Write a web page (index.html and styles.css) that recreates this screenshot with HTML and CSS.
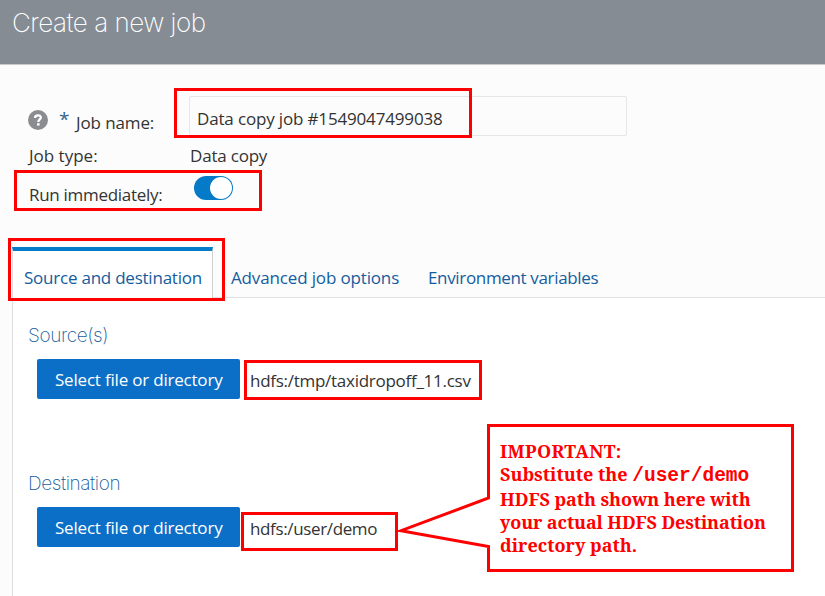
FILE: index.html
```
<!DOCTYPE html>
<html lang="en">
<head>
<meta charset="utf-8">
<title>Create a new job</title>
<link rel="stylesheet" href="styles.css">
</head>
<body>
<header class="header"><h1>Create a new job</h1></header>
<main>
  <section class="form">
    <div class="row row-name">
      <div class="label">
        <svg class="help" width="20" height="20" viewBox="0 0 20 20"><circle cx="10" cy="10" r="10" fill="#8a8d90"/><path d="M7 8C7 4.4 13.1 4.5 12.8 7.8C12.7 9.4 10.3 9.7 10.3 12" fill="none" stroke="#fff" stroke-width="2.3"/><rect x="9" y="13.2" width="2.6" height="2.4" fill="#fff"/></svg>
        <span class="star">*</span><span class="t-name">Job name:</span>
      </div>
      <div class="input"><span class="t-value">Data copy job #1549047499038</span></div>
    </div>
    <div class="row row-type"><span class="label t-type">Job type:</span><span class="t-copy">Data copy</span></div>
    <div class="row row-run"><span class="label t-run">Run immediately:</span><span class="toggle"><i></i></span></div>
  </section>
  <nav class="tabs">
    <div class="tab active"><span class="t-tab1">Source and destination</span></div>
    <div class="tab second"><span class="t-tab2">Advanced job options</span></div>
    <div class="tab third"><span class="t-tab3">Environment variables</span></div>
  </nav>
  <section class="panel">
    <h2 class="t-source">Source(s)</h2>
    <div class="pick"><button><span>Select file or directory</span></button><span class="path t-path1">hdfs:/tmp/taxidropoff_11.csv</span></div>
    <h2 class="t-dest">Destination</h2>
    <div class="pick"><button><span>Select file or directory</span></button><span class="path t-path2">hdfs:/user/demo</span></div>
  </section>
</main>
<svg class="marks" width="825" height="596" viewBox="0 0 825 596" fill="none" stroke="#f00" stroke-width="3">
  <rect x="175.500" y="89.500" width="295" height="47"/>
  <rect x="15.500" y="171.500" width="245" height="38"/>
  <rect x="9.500" y="239.500" width="214" height="60"/>
  <rect x="245.500" y="361.500" width="235" height="37"/>
  <rect x="242.500" y="513.500" width="154" height="36"/>
  <path d="M488.500 425.500H792.500V570.500H488.500V546.500L401 530.700L488.500 498Z" fill="#fff"/>
</svg>
<aside class="note">
  <div class="n1"><span>IMPORTANT:</span></div>
  <div class="n2"><span>Substitute the</span> <code>/user/demo</code></div>
  <div class="n3"><span>HDFS path shown here with</span></div>
  <div class="n4"><span>your actual HDFS Destination</span></div>
  <div class="n5"><span>directory path.</span></div>
</aside>
</body>
</html>
```
FILE: styles.css
```
* { box-sizing: border-box; }
body { margin: 0; width: 825px; height: 596px; overflow: hidden; position: relative; background: #fcfcfc; color: #333; font: 17px/24px "Open Sans", "Noto Sans", sans-serif; white-space: nowrap; }
.header { height: 65px; background: #858c94; border-bottom: 1px solid #c9cccf; padding: 7px 0 0 12px; }
h1 { margin: 0; font: 200 26px/32px Inter, sans-serif; letter-spacing: -.5px; color: #fff; }
.form { height: 182px; padding: 31px 0 0 28px; }
.row { display: flex; }
.row-name { height: 48px; }
.label { width: 162px; flex: none; }
.row-name .label { width: 161px; display: flex; padding-top: 14px; }
.help { margin: 0 11px 0 0; }
.star { width: 17px; font-size: 19px; line-height: 24px; margin-top: -3px; color: #33658c; }
.t-name { margin-top: 1px; letter-spacing: -.12px; }
.t-value { letter-spacing: -.16px; }
.t-copy { letter-spacing: -.2px; }
.t-run { letter-spacing: -.3px; }
.t-tab1 { letter-spacing: -.23px; }
.t-tab2 { letter-spacing: -.15px; }
.t-tab3 { letter-spacing: -.34px; }
.t-path1 { letter-spacing: -.27px; }
.t-path2 { letter-spacing: -.36px; }
.input { width: 438px; height: 40px; border: 1px solid #e4e6e8; border-radius: 2px; padding: 10px 7px; }
.row-type { height: 32px; }
.row-type .label { padding-left: 1px; }
.row-run .label { width: 166px; padding: 7px 0 0 1px; }
.toggle { width: 39px; height: 24px; border-radius: 12px; background: #057ac8; display: flex; justify-content: flex-end; padding: 1px; }
.toggle i { width: 22px; height: 22px; border-radius: 50%; background: #fff; }
.tabs { height: 51px; display: flex; border-bottom: 1px solid #dfe2e4; margin-left: 12px; color: #145c9e; }
.tab { padding-top: 19px; }
.active { width: 201px; height: 51px; border-top: 4px solid #057ac8; border-left: 1px solid #dadcde; border-right: 1px solid #cfd2d5; background: #fff; padding: 15px 0 0 11px; }
.second { width: 215px; padding-left: 18px; }
.panel { height: 298px; margin-left: 12px; border-left: 1px solid #dcdedf; background: #fff; padding: 25px 0 0 15px; }
h2 { margin: 0; font: 200 19px/26px Inter, sans-serif; letter-spacing: -.4px; color: #145c9e; height: 36px; }
.pick { height: 40px; display: flex; align-items: center; padding-left: 9px; margin-bottom: 72px; }
button { width: 203px; height: 40px; border: 0; border-radius: 2px; background: #0c6fc7; color: #fff; font: inherit; letter-spacing: -.2px; padding: 2px 0 0 18px; text-align: left; }
.path { margin-left: 10px; padding-top: 3px; }
.marks { position: absolute; left: 0; top: 0; }
.note { position: absolute; left: 500px; top: 440px; color: #f00; font: bold 18px/23px "Noto Serif", Cambria, "DejaVu Serif", serif; }
.note code { font: bold 19.5px/23px "Liberation Mono", monospace; }
.n1 { letter-spacing: .35px; }
.n2 { height: 25px; }
.n3 { letter-spacing: -.08px; }
.n4 { letter-spacing: -.14px; }
```
